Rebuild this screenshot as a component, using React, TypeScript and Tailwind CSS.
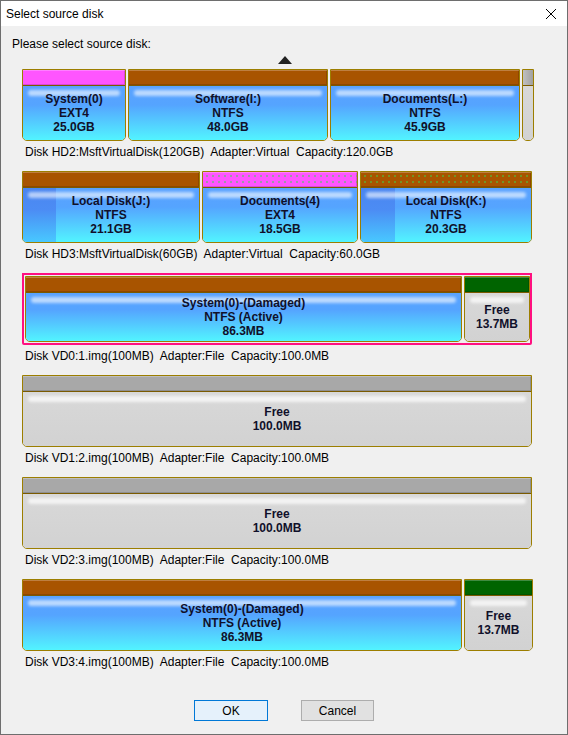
import React from "react";

type Part = {
  w: string;
  top: "pink" | "brown" | "gray" | "green" | "scroll";
  dotted?: boolean;
  used?: string;
  lines: string[];
  free?: boolean;
};

type Disk = { parts: Part[]; label: string; selected?: boolean };

const topColors: Record<string, string> = {
  pink: "bg-[#ff55ff]",
  brown: "bg-[#a85400]",
  gray: "bg-[#a8a8a8]",
  green: "bg-[#006400]",
  scroll: "bg-[#a8a8a8]",
};

const disks: Disk[] = [
  {
    parts: [
      { w: "w-[104px]", top: "pink", lines: ["System(0)", "EXT4", "25.0GB"] },
      { w: "w-[200px]", top: "brown", lines: ["Software(I:)", "NTFS", "48.0GB"] },
      { w: "w-[190px]", top: "brown", lines: ["Documents(L:)", "NTFS", "45.9GB"] },
      { w: "w-[12px]", top: "scroll", lines: [], free: true },
    ],
    label: "Disk HD2:MsftVirtualDisk(120GB)  Adapter:Virtual  Capacity:120.0GB",
  },
  {
    parts: [
      { w: "w-[178px]", top: "brown", used: "w-[33px]", lines: ["Local Disk(J:)", "NTFS", "21.1GB"] },
      { w: "w-[156px]", top: "pink", dotted: true, lines: ["Documents(4)", "EXT4", "18.5GB"] },
      { w: "w-[172px]", top: "brown", dotted: true, used: "w-[34px]", lines: ["Local Disk(K:)", "NTFS", "20.3GB"] },
    ],
    label: "Disk HD3:MsftVirtualDisk(60GB)  Adapter:Virtual  Capacity:60.0GB",
  },
  {
    selected: true,
    parts: [
      { w: "w-[437px]", top: "brown", lines: ["System(0)-(Damaged)", "NTFS (Active)", "86.3MB"] },
      { w: "w-[66px]", top: "green", free: true, lines: ["Free", "13.7MB"] },
    ],
    label: "Disk VD0:1.img(100MB)  Adapter:File  Capacity:100.0MB",
  },
  {
    parts: [{ w: "w-[510px]", top: "gray", free: true, lines: ["Free", "100.0MB"] }],
    label: "Disk VD1:2.img(100MB)  Adapter:File  Capacity:100.0MB",
  },
  {
    parts: [{ w: "w-[510px]", top: "gray", free: true, lines: ["Free", "100.0MB"] }],
    label: "Disk VD2:3.img(100MB)  Adapter:File  Capacity:100.0MB",
  },
  {
    parts: [
      { w: "w-[440px]", top: "brown", lines: ["System(0)-(Damaged)", "NTFS (Active)", "86.3MB"] },
      { w: "w-[69px]", top: "green", free: true, lines: ["Free", "13.7MB"] },
    ],
    label: "Disk VD3:4.img(100MB)  Adapter:File  Capacity:100.0MB",
  },
];

function Partition({ p, h }: { p: Part; h: string }) {
  const body = p.free
    ? "bg-[linear-gradient(to_bottom,#d8d8d8,#d2d2d2)]"
    : "bg-[linear-gradient(to_bottom,#5aa2ff_0%,#55a4ff_35%,#52f4ff_100%)]";
  return (
    <div
      className={`${p.w} ${h} shrink-0 flex flex-col border border-[#9c7e00] rounded-b-[5px] overflow-hidden`}
    >
      <div
        className={`relative h-[16px] shrink-0 ${topColors[p.top]} border-b border-[#7a5a00] shadow-[inset_0_1px_0_rgba(255,255,255,0.25),inset_-1px_-1px_0_rgba(0,0,0,0.15)]`}
      >
        {p.dotted && (
          <div className="absolute inset-0 bg-[radial-gradient(circle,#3cd84a_0.5px,transparent_0.9px)] bg-[length:6px_6px] bg-[position:1px_1px]" />
        )}
        {p.top === "scroll" && <div className="absolute inset-0 bg-[linear-gradient(to_right,#c0c0c0,#a0a0a0)]" />}
      </div>
      <div className={`relative flex-1 ${body}`}>
        {p.used && (
          <div
            className={`absolute left-0 top-0 bottom-0 ${p.used} bg-[linear-gradient(to_bottom,#4a86f0_0%,#4c8cf4_40%,#48c8ff_100%)]`}
          />
        )}
        <div
          className={`absolute top-[4px] left-[5px] right-[5px] h-[6px] rounded-full ${
            p.free ? "bg-white/70" : "bg-white/60"
          } blur-[1.5px]`}
        />
        <div className="relative h-full flex flex-col items-center justify-center font-['Liberation_Sans',Arial,sans-serif] font-bold text-[12px] leading-[14px] text-[#10102a]">
          {p.lines.map((l, i) => (
            <div key={i} className="whitespace-nowrap">
              {l}
            </div>
          ))}
        </div>
      </div>
    </div>
  );
}

export default function App() {
  return (
    <div className="w-[568px] h-[735px] flex flex-col border border-[#6e6e6e] bg-[#f0f0f0] font-['Liberation_Sans',Arial,sans-serif] text-black overflow-hidden">
      <div className="h-[25px] bg-white flex items-center justify-between pl-[5px] pr-[10px] shrink-0">
        <span className="text-[12px]">Select source disk</span>
        <svg width="12" height="12" viewBox="0 0 12 12">
          <path d="M1 1L11 11M11 1L1 11" stroke="#000" strokeWidth="1" />
        </svg>
      </div>
      <div className="flex-1 flex flex-col pl-[21px]">
        <div className="h-[25px] flex items-end">
          <span className="text-[12px] leading-[14px] -ml-[10px] pb-0">Please select source disk:</span>
        </div>
        <div className="h-[18px] relative">
          <svg className="absolute left-[256px] top-[5px]" width="14" height="8" viewBox="0 0 14 8">
            <path d="M7 0L14 8H0Z" fill="#222" />
          </svg>
        </div>
        <div className="flex flex-col gap-[11px]">
          {disks.map((d, i) => (
            <div key={i} className="flex flex-col">
              {d.selected ? (
                <div className="w-[510px] h-[72px] flex gap-[2px] border-2 border-[#ff1080] p-[1px] rounded-b-[2px]">
                  {d.parts.map((p, j) => (
                    <Partition key={j} p={p} h="h-[66px]" />
                  ))}
                </div>
              ) : (
                <div className="flex gap-[2px] h-[72px]">
                  {d.parts.map((p, j) => (
                    <Partition key={j} p={p} h="h-[72px]" />
                  ))}
                </div>
              )}
              <div className="mt-[3px] h-[16px] pl-[3px] text-[12px] leading-[16px] whitespace-pre">{d.label}</div>
            </div>
          ))}
        </div>
        <div className="flex gap-[33px] pl-[172px] mt-[30px]">
          <button className="w-[74px] h-[21px] border border-[#0078d7] bg-[#e5f1fb] text-[12px]">OK</button>
          <button className="w-[73px] h-[21px] border border-[#adadad] bg-[#e1e1e1] text-[12px]">Cancel</button>
        </div>
      </div>
    </div>
  );
}
